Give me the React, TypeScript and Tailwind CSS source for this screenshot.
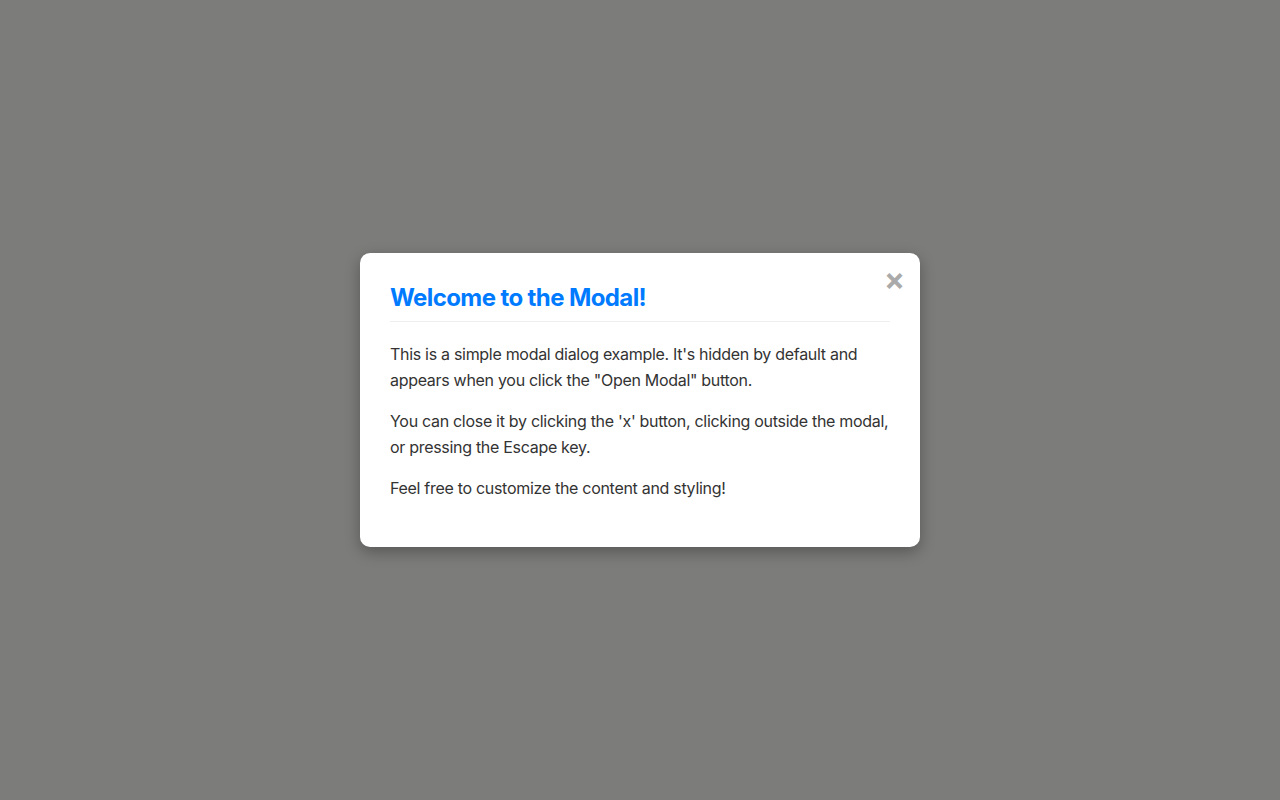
import { useState, useEffect } from 'react';

export default function App() {
  const [open, setOpen] = useState(true);

  useEffect(() => {
    const onKey = (e: KeyboardEvent) => {
      if (e.key === 'Escape') setOpen(false);
    };
    window.addEventListener('keydown', onKey);
    return () => window.removeEventListener('keydown', onKey);
  }, []);

  return (
    <div
      className="min-h-screen w-full bg-[#f8f9fa] text-[#333]"
      style={{ fontFamily: 'Inter, "Noto Sans", sans-serif' }}
    >
      {!open && (
        <div className="flex min-h-screen items-center justify-center">
          <button
            type="button"
            className="rounded bg-[#007bff] px-5 py-2.5 text-white"
            onClick={() => setOpen(true)}
          >
            Open Modal
          </button>
        </div>
      )}
      {open && (
        <div
          data-component="modal-backdrop"
          className="fixed inset-0 flex items-center justify-center bg-[#7c7d7b]"
          onClick={() => setOpen(false)}
        >
          <div
            data-component="modal"
            className="relative w-[560px] rounded-[10px] bg-white p-[30px] shadow-[0_5px_15px_rgba(0,0,0,0.3)]"
            onClick={(e) => e.stopPropagation()}
          >
            <button
              type="button"
              aria-label="Close"
              className="absolute right-[15px] top-[10px] text-[31px] font-bold leading-none text-[#aaa] hover:text-black"
              onClick={() => setOpen(false)}
            >
              &times;
            </button>
            <h2 className="mb-[19px] border-b border-[#eee] pb-[8px] text-[24px] font-bold leading-[30px] tracking-[-0.6px] text-[#007bff]">
              Welcome to the Modal!
            </h2>
            <p className="mb-[15px] text-[16px] leading-[26px] tracking-[-0.3px]">
              This is a simple modal dialog example. It's hidden by default and appears when you click the "Open Modal" button.
            </p>
            <p className="mb-[15px] text-[16px] leading-[26px] tracking-[-0.3px]">
              You can close it by clicking the 'x' button, clicking outside the modal, or pressing the Escape key.
            </p>
            <p className="mb-[16px] text-[16px] leading-[26px] tracking-[-0.3px]">
              Feel free to customize the content and styling!
            </p>
          </div>
        </div>
      )}
    </div>
  );
}
